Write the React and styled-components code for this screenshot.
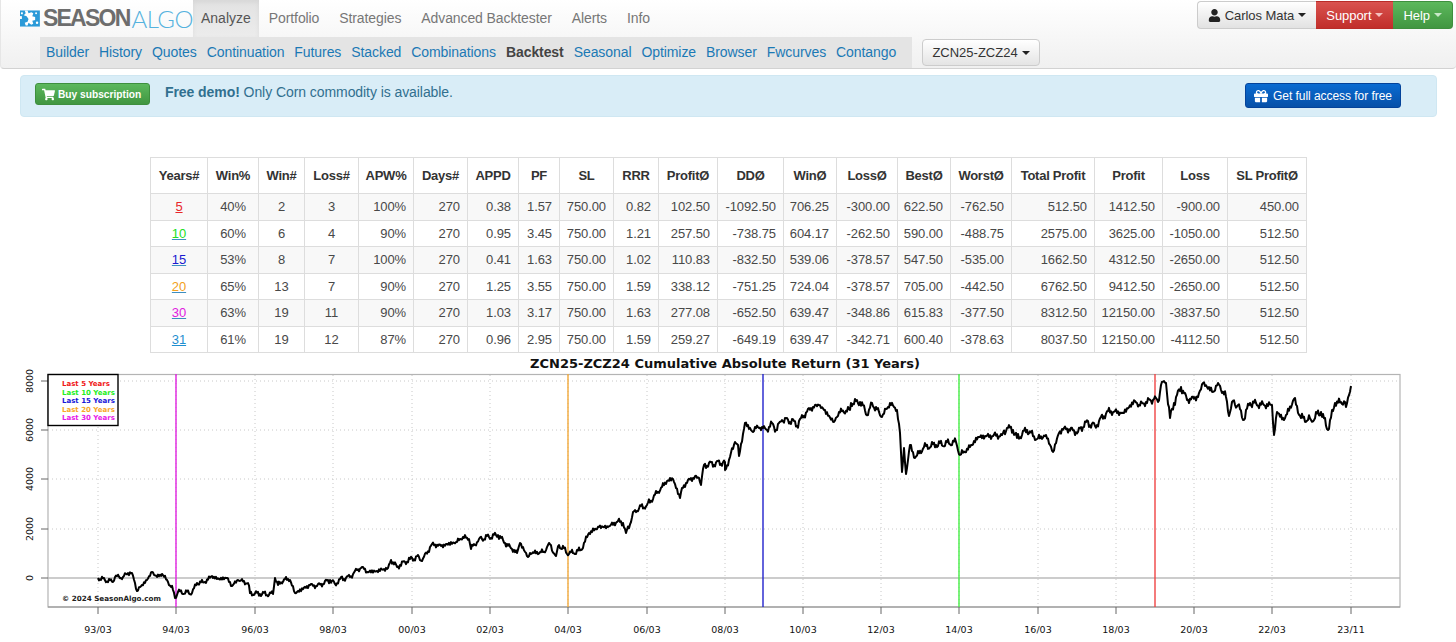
import React from 'react';
import styled, { createGlobalStyle } from 'styled-components';
import { FaUser, FaShoppingCart, FaGift } from 'react-icons/fa';

const GlobalStyle = createGlobalStyle`
  html, body {
    margin: 0;
    padding: 0;
    background: #fff;
    overflow: hidden;
  }
  body {
    font-family: "Liberation Sans", Arial, sans-serif;
    font-size: 14px;
    color: #333;
  }
`;

const Page = styled.div`
  width: 1456px;
  height: 642px;
  overflow: hidden;
`;

const Navbar = styled.div`
  height: 68px;
  box-sizing: content-box;
  display: flex;
  flex-direction: column;
  background: linear-gradient(to bottom, #fff, #f0f0f0);
  border-bottom: 1px solid #d2d2d2;
  border-left: 1px solid #e6e6e6;
  border-radius: 0 0 4px 4px;
`;

const TopRow = styled.div`
  height: 37px;
  display: flex;
  align-items: flex-start;
`;

const Logo = styled.div`
  width: 192px;
  height: 36px;
  display: flex;
  align-items: center;
  padding-left: 19px;
  box-sizing: border-box;
`;

const LogoDark = styled.span`
  font-size: 23px;
  font-weight: 700;
  letter-spacing: -1.75px;
  color: #6d6d6d;
  margin-left: 3px;
`;

const LogoLight = styled.span`
  font-family: Lato, "Liberation Sans", sans-serif;
  font-size: 24px;
  font-weight: 300;
  letter-spacing: -0.5px;
  color: #55b2de;
  margin-left: 2px;
`;

const Tab = styled.a`
  height: 37px;
  display: flex;
  align-items: center;
  padding: 0 ${(p) => (p.$active ? '8px' : '10px')};
  color: ${(p) => (p.$active ? '#555' : '#777')};
  letter-spacing: ${(p) => (p.$active ? '0' : '-0.1px')};
  background: ${(p) => (p.$active ? 'linear-gradient(to bottom, #e2e2e2, #ececec)' : 'none')};
  box-shadow: ${(p) => (p.$active ? 'inset 0 2px 5px rgba(0, 0, 0, 0.06)' : 'none')};
  padding-bottom: 2px;
  box-sizing: border-box;
`;

const RightGroup = styled.div`
  margin-left: auto;
  margin-right: 3px;
  margin-top: 1px;
  display: flex;
`;

const GroupButton = styled.button`
  height: 28px;
  padding: 0 10px;
  display: flex;
  align-items: center;
  gap: 4px;
  font: 13px "Liberation Sans", Arial, sans-serif;
  letter-spacing: -0.05px;
  color: ${(p) => p.$color || '#fff'};
  background: ${(p) => p.$bg};
  border: 1px solid ${(p) => p.$border};
  border-left-width: ${(p) => (p.$first ? '1px' : '0')};
  border-right-width: ${(p) => (p.$last ? '1px' : '0')};
  border-radius: ${(p) => p.$radius || '0'};
`;

const Caret = styled.span`
  display: inline-block;
  width: 0;
  height: 0;
  border-top: 4px solid ${(p) => p.$color || '#222'};
  border-left: 4px solid transparent;
  border-right: 4px solid transparent;
`;

const BottomRow = styled.div`
  height: 31px;
  display: flex;
  align-items: center;
  padding-left: 39px;
`;

const SubNav = styled.div`
  width: 872px;
  height: 31px;
  display: flex;
  align-items: center;
  padding-left: 1px;
  box-sizing: border-box;
  background: #e4e4e4;
  letter-spacing: -0.08px;
`;

const SubLink = styled.a`
  padding: 0 5px;
  color: ${(p) => (p.$active ? '#444' : '#1b79b5')};
  font-weight: ${(p) => (p.$active ? 700 : 400)};
  line-height: 31px;
`;

const SymbolButton = styled.button`
  margin-left: 10px;
  width: 118px;
  height: 27px;
  display: flex;
  align-items: center;
  justify-content: center;
  gap: 4px;
  font: 13px "Liberation Sans", Arial, sans-serif;
  color: #333;
  background: linear-gradient(to bottom, #fff, #e4e4e4);
  border: 1px solid #ccc;
  border-radius: 4px;
`;

const Alert = styled.div`
  margin: 6px 19px 0 20px;
  height: 42px;
  box-sizing: border-box;
  display: flex;
  align-items: flex-start;
  padding: 7px 35px 0 14px;
  background: #d9edf7;
  border: 1px solid #cfe7f2;
  border-radius: 4px;
  color: #31708f;
`;

const BuyButton = styled.button`
  width: 115px;
  height: 22px;
  padding: 0 0 0 6px;
  display: flex;
  align-items: center;
  gap: 3px;
  font: 700 10.2px "Liberation Sans", Arial, sans-serif;
  color: #fff;
  background: linear-gradient(to bottom, #5cb85c, #419641);
  border: 1px solid #3e8f3e;
  border-radius: 3px;
`;

const AlertText = styled.div`
  margin-left: 15px;
  line-height: 18px;
  letter-spacing: -0.07px;
`;

const GiftButton = styled.button`
  margin-left: auto;
  width: 156px;
  height: 25px;
  padding: 0;
  display: flex;
  align-items: center;
  justify-content: center;
  gap: 5px;
  font: 12px "Liberation Sans", Arial, sans-serif;
  letter-spacing: -0.05px;
  color: #fff;
  background: linear-gradient(to bottom, #0a6bd1, #0650a8);
  border: 1px solid #04439a;
  border-radius: 3px;
`;

const Table = styled.table`
  margin: 40px 0 0 150px;
  width: 1156px;
  table-layout: fixed;
  border-collapse: collapse;
  font-size: 13px;
  letter-spacing: -0.1px;
  color: #484848;
`;

const Th = styled.th`
  height: 36px;
  padding: 0 2px;
  box-sizing: border-box;
  text-align: center;
  font-weight: 700;
  letter-spacing: -0.25px;
  color: #333;
  border: 1px solid #ddd;
  white-space: nowrap;
`;

const Td = styled.td`
  height: 26.5px;
  padding: 0 7px 0 0;
  box-sizing: border-box;
  text-align: ${(p) => (p.$center ? 'center' : 'right')};
  ${(p) => p.$center && 'padding: 0;'}
  border: 1px solid #ddd;
  white-space: nowrap;
`;

const Row = styled.tr`
  background: ${(p) => (p.$striped ? '#f8f8f8' : '#fff')};
`;

const YearLink = styled.a`
  color: ${(p) => p.$color};
  text-decoration: underline;
  text-decoration-color: ${(p) => p.$line};
`;

const Chart = styled.svg`
  display: block;
`;

const columnWidths = [57, 51, 46, 54, 55, 54, 51, 41, 54, 45, 59, 66, 53, 61, 53, 61, 83, 68, 65, 79];

const headers = ['Years#', 'Win%', 'Win#', 'Loss#', 'APW%', 'Days#', 'APPD', 'PF', 'SL', 'RRR', 'ProfitØ', 'DDØ', 'WinØ', 'LossØ', 'BestØ', 'WorstØ', 'Total Profit', 'Profit', 'Loss', 'SL ProfitØ'];

const rows = [
  { years: '5', color: '#e8262a', line: '#e8262a', cells: ['40%', '2', '3', '100%', '270', '0.38', '1.57', '750.00', '0.82', '102.50', '-1092.50', '706.25', '-300.00', '622.50', '-762.50', '512.50', '1412.50', '-900.00', '450.00'] },
  { years: '10', color: '#22e022', line: '#3d8fc0', cells: ['60%', '6', '4', '90%', '270', '0.95', '3.45', '750.00', '1.21', '257.50', '-738.75', '604.17', '-262.50', '590.00', '-488.75', '2575.00', '3625.00', '-1050.00', '512.50'] },
  { years: '15', color: '#1a1ad0', line: '#3d8fc0', cells: ['53%', '8', '7', '100%', '270', '0.41', '1.63', '750.00', '1.02', '110.83', '-832.50', '539.06', '-378.57', '547.50', '-535.00', '1662.50', '4312.50', '-2650.00', '512.50'] },
  { years: '20', color: '#f2a020', line: '#3d8fc0', cells: ['65%', '13', '7', '90%', '270', '1.25', '3.55', '750.00', '1.59', '338.12', '-751.25', '724.04', '-378.57', '705.00', '-442.50', '6762.50', '9412.50', '-2650.00', '512.50'] },
  { years: '30', color: '#e020e0', line: '#3d8fc0', cells: ['63%', '19', '11', '90%', '270', '1.03', '3.17', '750.00', '1.63', '277.08', '-652.50', '639.47', '-348.86', '615.83', '-377.50', '8312.50', '12150.00', '-3837.50', '512.50'] },
  { years: '31', color: '#1f8fd0', line: '#1f8fd0', cells: ['61%', '19', '12', '87%', '270', '0.96', '2.95', '750.00', '1.59', '259.27', '-649.19', '639.47', '-342.71', '600.40', '-378.63', '8037.50', '12150.00', '-4112.50', '512.50'] },
];

const tabs = ['Portfolio', 'Strategies', 'Advanced Backtester', 'Alerts', 'Info'];
const subLinks = ['Builder', 'History', 'Quotes', 'Continuation', 'Futures', 'Stacked', 'Combinations', 'Backtest', 'Seasonal', 'Optimize', 'Browser', 'Fwcurves', 'Contango'];

const xTicks = [[98, '93/03'], [176, '94/03'], [255, '96/03'], [333, '98/03'], [412, '00/03'], [490, '02/03'], [568, '04/03'], [647, '06/03'], [725, '08/03'], [803, '10/03'], [881, '12/03'], [959, '14/03'], [1038, '16/03'], [1116, '18/03'], [1194, '20/03'], [1272, '22/03'], [1351, '23/11']];
const yTicks = [[381, '8000'], [430, '6000'], [479, '4000'], [529, '2000'], [578, '0']];
const periods = [[176, '#e020e0'], [568, '#f2a93a'], [763, '#2222cc'], [959, '#44ee44'], [1155, '#f04444']];
const legend = [['Last 5 Years', '#f01818'], ['Last 10 Years', '#22ee22'], ['Last 15 Years', '#1818d8'], ['Last 20 Years', '#f8a828'], ['Last 30 Years', '#e818e8']];

// traced from the equity curve, x / y in page pixels
const curve = [
  [98,578],[113,582],[115,577],[123,577],[128,573],[132,573],[135,583],[137,591],[142,585],[147,580],[152,572],[157,577],[162,574],[168,582],[173,590],[175,598],[178,592],[192,593],[197,583],[205,582],[212,576],[217,579],[227,578],[232,586],[238,580],[248,583],[250,593],[260,594],[273,594],[275,578],[278,585],[285,579],[290,580],[295,593],[310,585],[317,586],[330,580],[335,584],[340,579],[350,577],[357,570],[363,567],[367,572],[377,571],[388,568],[391,560],[397,567],
  [400,565],[410,559],[419,557],[422,561],[432,544],[441,546],[456,542],[463,537],[469,539],[471,549],[479,539],[498,535],[505,543],[517,553],[520,543],[528,557],[530,553],[544,552],[549,543],[556,556],[559,545],[569,554],[581,550],[589,533],[599,527],[608,527],[618,521],[623,523],[626,533],[635,510],[647,505],[657,493],[667,481],[673,479],[680,498],[682,488],[691,478],[699,478],[701,485],[704,465],[725,462],[725,470],[730,457],[735,442],[738,445],[739,456],[745,423],[753,432],[755,427],[763,428],[767,430],[772,423],[776,430],[782,420],[794,421],[797,426],[801,418],[811,408],[819,405],[824,410],[834,422],[839,412],[850,410],[851,403],[860,402],[868,415],[872,403],[882,417],
  [890,403],[897,410],[900,433],[902,472],[904,448],[906,474],[910,445],[915,458],[924,447],[936,445],[956,442],[960,455],[970,447],[978,437],[1002,435],[1007,428],[1013,430],[1017,438],[1027,430],[1037,439],[1046,435],[1053,452],[1059,433],[1064,428],[1078,432],[1086,422],[1095,426],[1108,411],[1123,413],[1135,401],[1139,405],[1154,399],[1158,402],[1161,385],[1166,383],[1170,418],[1174,403],[1181,387],[1187,400],[1198,397],[1203,383],[1213,392],[1218,383],[1226,397],[1229,416],[1232,402],[1238,405],[1243,420],[1250,403],[1264,405],[1272,405],[1274,435],[1277,412],[1284,420],[1294,399],[1301,418],[1311,420],[1321,412],[1328,430],[1335,403],[1345,402],[1346,407],[1351,386],
];

function buildCurvePath() {
  let d = `M${curve[0][0]} ${curve[0][1]}`;
  let tick = 0;
  for (let i = 1; i < curve.length; i++) {
    const [x0, y0] = curve[i - 1];
    const [x1, y1] = curve[i];
    const steps = Math.max(1, Math.round(x1 - x0));
    for (let s = 1; s <= steps; s++) {
      tick++;
      const t = s / steps;
      // day to day noise, dropped at the traced points. Later years swing more
      const size = 0.9 + (x0 / 1351) * 0.9;
      const wiggle = s === steps ? 0 : (Math.sin(tick * 2.7) + Math.sin(tick * 7.1 + 1) + Math.sin(tick * 0.9)) * size;
      d += `L${(x0 + (x1 - x0) * t).toFixed(1)} ${(y0 + (y1 - y0) * t + wiggle).toFixed(1)}`;
    }
  }
  return d;
}

const curvePath = buildCurvePath();

function LogoMark() {
  return (
    <svg width="21" height="17" viewBox="0 0 21 17">
      <rect width="21" height="17" fill="#2b9ad8" />
      <path d="M5 0h3l1 3 3-1 2 1-1 3 3 1v3l-3 1 1 3-2 1-3-2-1 3H6l-1-3 3-1 1-3-2-3-3-1 2-2z" fill="#fff" />
      <rect x="1" y="2" width="2" height="2" fill="#fff" />
      <rect x="0" y="6" width="2" height="3" fill="#fff" />
      <circle cx="18" cy="13" r="1.3" fill="#fff" />
      <circle cx="17" cy="3" r="1" fill="#fff" />
    </svg>
  );
}

function CumulativeChart() {
  return (
    <Chart width="1456" height="289" viewBox="0 353 1456 289" fontFamily="'DejaVu Sans', sans-serif">
      <text x="725" y="368" textAnchor="middle" fontSize="13" fontWeight="700" fill="#111">
        ZCN25-ZCZ24 Cumulative Absolute Return (31 Years)
      </text>
      {yTicks.slice(0, 4).map(([y]) => (
        <line key={y} x1="48" x2="1400" y1={y} y2={y} stroke="#c8c8c8" strokeDasharray="1 3" />
      ))}
      {xTicks.map(([x]) => (
        <line key={x} x1={x} x2={x} y1="375" y2="607" stroke="#c8c8c8" strokeDasharray="1 3" />
      ))}
      <line x1="48" x2="1400" y1="578" y2="578" stroke="#bbb" strokeWidth="1.5" />
      <rect x="48" y="374.5" width="1352" height="232.5" fill="none" stroke="#b4b4b4" strokeWidth="1.2" />
      <line x1="48" x2="1400" y1="607" y2="607" stroke="#909090" strokeWidth="1.2" />
      {periods.map(([x, color]) => (
        <line key={x} x1={x} x2={x} y1="374" y2="607" stroke={color} strokeWidth="1.4" />
      ))}
      <path d={curvePath} fill="none" stroke="#000" strokeWidth="2" strokeLinejoin="round" />
      {xTicks.map(([x, label]) => (
        <g key={label}>
          <line x1={x} x2={x} y1="607" y2="614" stroke="#666" />
          <text x={x} y="632.5" textAnchor="middle" fontSize="9.5" fill="#111">{label}</text>
        </g>
      ))}
      {yTicks.map(([y, label]) => (
        <g key={label}>
          <line x1="41" x2="48" y1={y} y2={y} stroke="#666" />
          <text transform={`translate(33 ${y}) rotate(-90)`} textAnchor="middle" fontSize="9.5" fill="#111">{label}</text>
        </g>
      ))}
      <rect x="48" y="374.5" width="70" height="51" fill="#fff" stroke="#000" strokeWidth="1.4" />
      {legend.map(([label, color], i) => (
        <text key={label} x="62" y={386 + i * 8.6} fontSize="7" fontWeight="700" fill={color}>{label}</text>
      ))}
      <text x="62" y="601" fontSize="7.2" fontWeight="700" fill="#222">© 2024 SeasonAlgo.com</text>
    </Chart>
  );
}

export default function App() {
  return (
    <Page>
      <GlobalStyle />
      <Navbar>
        <TopRow>
          <Logo>
            <LogoMark />
            <LogoDark>SEASON</LogoDark>
            <LogoLight>ALGO</LogoLight>
          </Logo>
          <Tab $active>Analyze</Tab>
          {tabs.map((t) => <Tab key={t}>{t}</Tab>)}
          <RightGroup>
            <GroupButton $first $bg="linear-gradient(to bottom, #fff, #e2e2e2)" $border="#ccc" $color="#333" $radius="4px 0 0 4px">
              <FaUser size={13} color="#222" />
              Carlos Mata
              <Caret />
            </GroupButton>
            <GroupButton $bg="linear-gradient(to bottom, #d9534f, #c12e2a)" $border="#b92c28">
              Support
              <Caret $color="#f5c0be" />
            </GroupButton>
            <GroupButton $last $bg="linear-gradient(to bottom, #5cb85c, #419641)" $border="#3e8f3e" $radius="0 4px 4px 0">
              Help
              <Caret $color="#c8e8c8" />
            </GroupButton>
          </RightGroup>
        </TopRow>
        <BottomRow>
          <SubNav>
            {subLinks.map((l) => <SubLink key={l} $active={l === 'Backtest'}>{l}</SubLink>)}
          </SubNav>
          <SymbolButton>
            ZCN25-ZCZ24
            <Caret />
          </SymbolButton>
        </BottomRow>
      </Navbar>

      <Alert>
        <BuyButton>
          <FaShoppingCart size={13} />
          Buy subscription
        </BuyButton>
        <AlertText><b>Free demo!</b> Only Corn commodity is available.</AlertText>
        <GiftButton>
          <FaGift size={14} />
          Get full access for free
        </GiftButton>
      </Alert>

      <Table>
        <colgroup>
          {columnWidths.map((w, i) => <col key={i} width={w} />)}
        </colgroup>
        <thead>
          <tr>{headers.map((h) => <Th key={h}>{h}</Th>)}</tr>
        </thead>
        <tbody>
          {rows.map((r, i) => (
            <Row key={r.years} $striped={i % 2 === 0}>
              <Td $center><YearLink $color={r.color} $line={r.line}>{r.years}</YearLink></Td>
              {r.cells.map((c, j) => <Td key={j} $center={j < 3}>{c}</Td>)}
            </Row>
          ))}
        </tbody>
      </Table>

      <CumulativeChart />
    </Page>
  );
}
